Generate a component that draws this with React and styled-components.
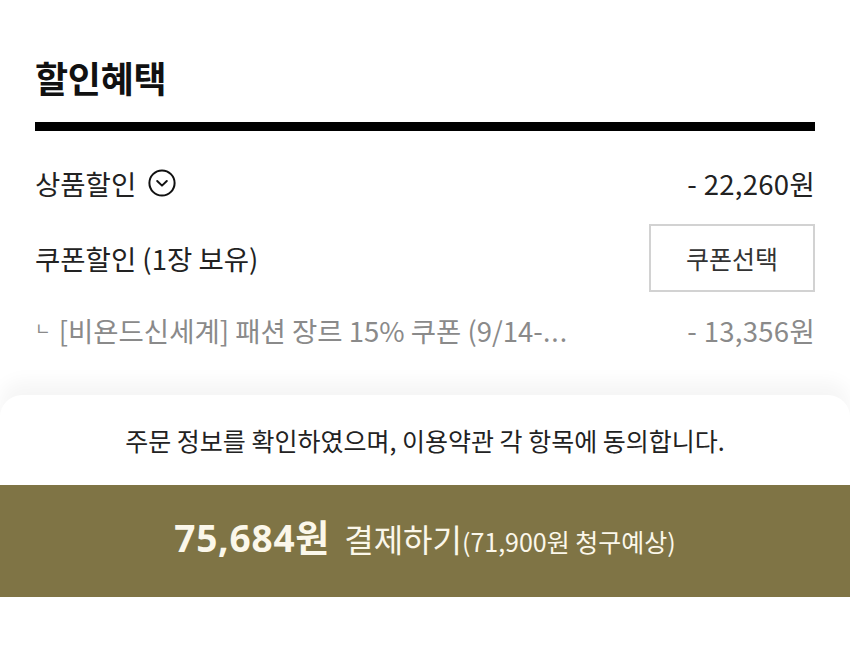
import styled, { createGlobalStyle } from "styled-components";

const GlobalStyle = createGlobalStyle`
  html, body {
    margin: 0;
    padding: 0;
    background: #ffffff;
  }
  body {
    font-family: "Noto Sans CJK KR", "Noto Sans", sans-serif;
    color: #222222;
    -webkit-font-smoothing: antialiased;
  }
`;

const Page = styled.div`
  width: 850px;
  height: 671px;
  overflow: hidden;
  display: flex;
  flex-direction: column;
  background: #ffffff;
`;

const Benefits = styled.section`
  padding: 55px 35px 0;
`;

const Title = styled.h2`
  margin: 0;
  font-size: 36px;
  line-height: 44px;
  font-weight: 700;
  color: #111111;
  letter-spacing: -0.3px;
`;

const Divider = styled.div`
  margin-top: 23px;
  height: 9px;
  background: #000000;
`;

const List = styled.div`
  padding-top: 21px;
  display: flex;
  flex-direction: column;
`;

const Row = styled.div`
  height: ${(p) => p.$h}px;
  display: flex;
  align-items: center;
  justify-content: space-between;
  font-size: 27.5px;
  color: ${(p) => (p.$muted ? "#8a8a8a" : "#222222")};
`;

const Label = styled.div`
  display: flex;
  align-items: center;
  gap: 12px;
  min-width: 0;
`;

const CouponName = styled.span`
  white-space: nowrap;
`;

const Dots = styled.span`
  font-family: "Noto Sans", sans-serif;
  letter-spacing: 1px;
`;

const Bullet = styled.span`
  font-size: 17px;
  vertical-align: 7px;
  margin-right: 8px;
`;

const Amount = styled.span`
  white-space: nowrap;
  letter-spacing: 0.3px;
`;

const CouponButton = styled.button`
  width: 166px;
  height: 68px;
  border: 2px solid #d2d2d2;
  background: #ffffff;
  font-family: inherit;
  font-size: 25px;
  color: #333333;
  padding: 0;
  cursor: pointer;
`;

const Sheet = styled.section`
  margin-top: 37px;
  flex: 1;
  background: #ffffff;
  border-radius: 22px 22px 0 0;
  box-shadow: 0 -14px 18px rgba(0, 0, 0, 0.04);
  padding-top: 30px;
  display: flex;
  flex-direction: column;
`;

const Agreement = styled.p`
  margin: 0;
  text-align: center;
  font-size: 25px;
  line-height: 30px;
  color: #222222;
`;

const PayBar = styled.button`
  margin-top: 30px;
  height: 112px;
  border: 0;
  background: #7f7445;
  color: #fbf7ea;
  font-family: inherit;
  display: flex;
  align-items: baseline;
  justify-content: center;
  padding-top: 24px;
  cursor: pointer;
`;

const Total = styled.span`
  font-family: "Noto Sans", "Noto Sans CJK KR", sans-serif;
  font-size: 37px;
  font-weight: 700;
  letter-spacing: 0.8px;
  margin-right: 14px;
`;

const PayLabel = styled.span`
  font-size: 32px;
  font-weight: 400;
`;

const Estimate = styled.span`
  font-size: 25px;
`;

function ChevronCircle() {
  return (
    <svg width="28" height="28" viewBox="0 0 28 28" fill="none">
      <circle cx="14" cy="14" r="12.6" stroke="#111" strokeWidth="2" />
      <path
        d="M9.2 12 L14 16.6 L18.8 12"
        stroke="#111"
        strokeWidth="2"
        strokeLinecap="round"
        strokeLinejoin="round"
      />
    </svg>
  );
}

export default function App() {
  return (
    <Page>
      <GlobalStyle />
      <Benefits>
        <Title>할인혜택</Title>
        <Divider />
        <List>
          <Row $h={62}>
            <Label>
              상품할인 <ChevronCircle />
            </Label>
            <Amount>- 22,260원</Amount>
          </Row>
          <Row $h={88}>
            <Label>쿠폰할인 (1장 보유)</Label>
            <CouponButton type="button">쿠폰선택</CouponButton>
          </Row>
          <Row $h={56} $muted>
            <CouponName>
              <Bullet>ㄴ</Bullet>[비욘드신세계] 패션 장르 15% 쿠폰 (9/14-
              <Dots>...</Dots>
            </CouponName>
            <Amount>- 13,356원</Amount>
          </Row>
        </List>
      </Benefits>
      <Sheet>
        <Agreement>주문 정보를 확인하였으며, 이용약관 각 항목에 동의합니다.</Agreement>
        <PayBar type="button">
          <Total>75,684원</Total>
          <PayLabel>결제하기</PayLabel>
          <Estimate>(71,900원 청구예상)</Estimate>
        </PayBar>
      </Sheet>
    </Page>
  );
}
